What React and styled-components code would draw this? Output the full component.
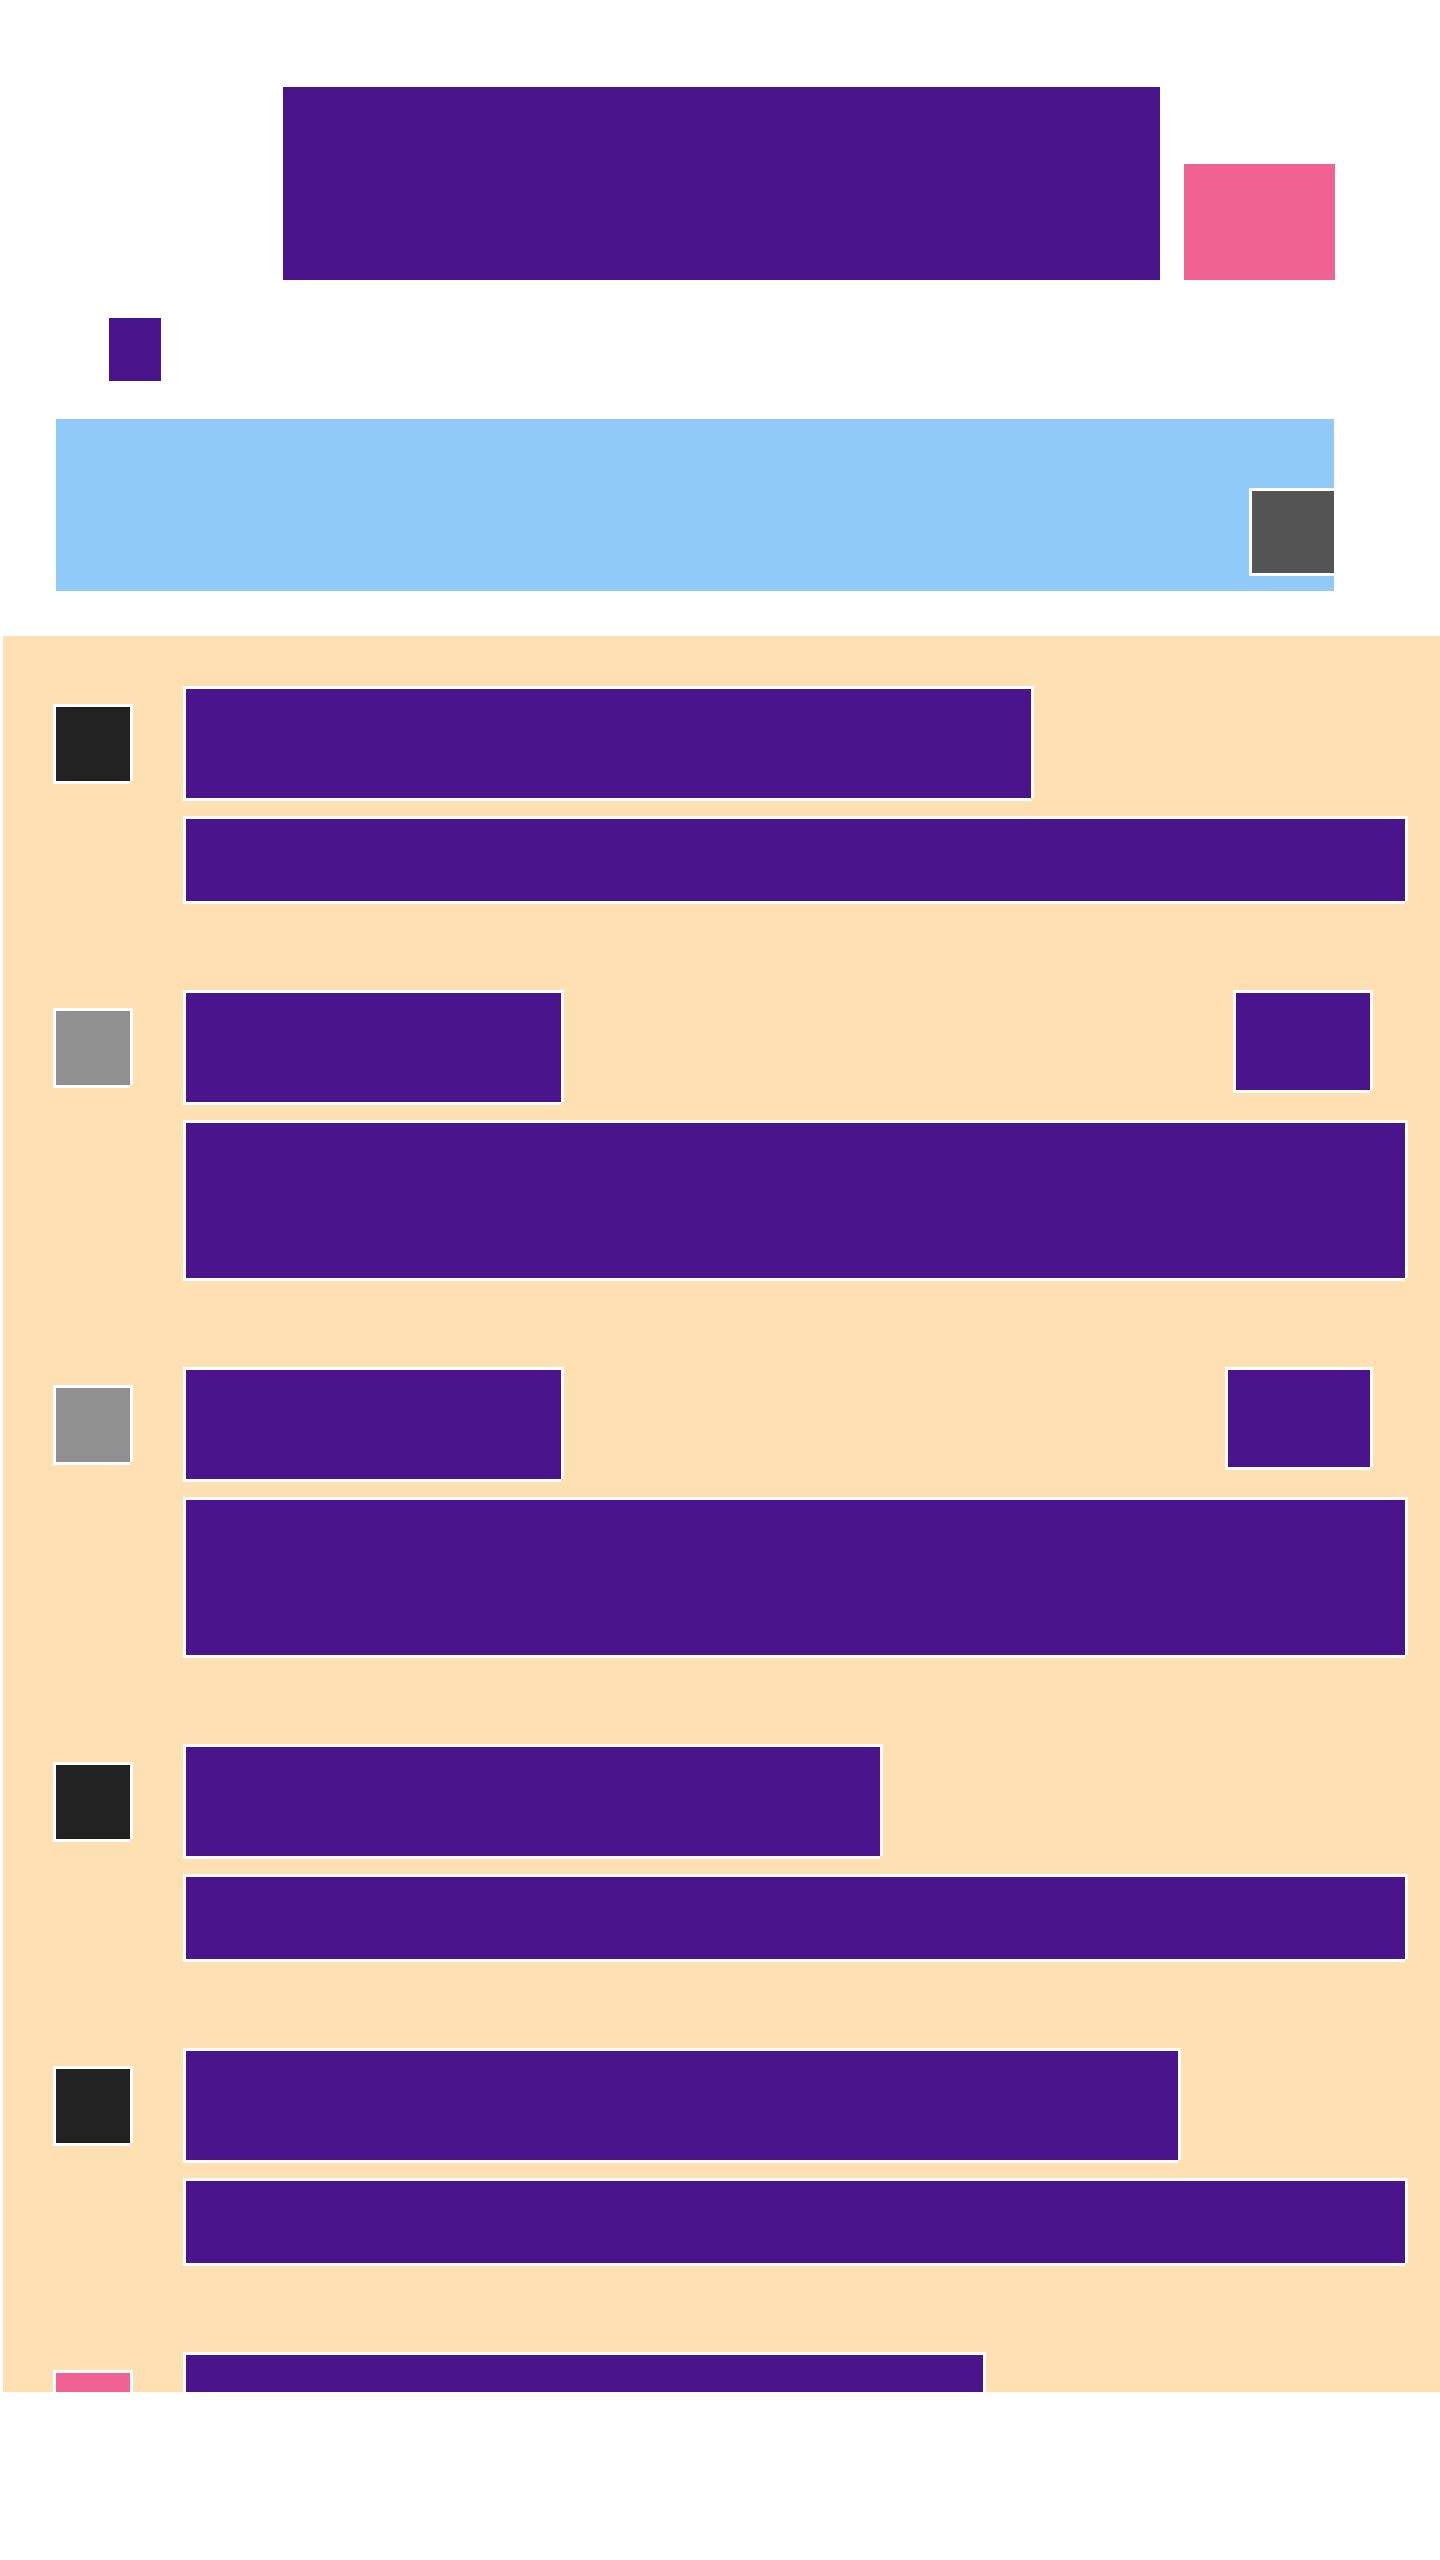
import React from 'react';
import styled, { createGlobalStyle } from 'styled-components';

const GlobalStyle = createGlobalStyle`
  *, *::before, *::after { box-sizing: border-box; }
  html, body { margin: 0; background: #ffffff; }
  body { font-family: Roboto, "Liberation Sans", sans-serif; }
`;

const purple = '#4a148c';
const pink = '#f06292';

const Page = styled.div`
  display: flex;
  flex-direction: column;
  height: 100vh;
  overflow: hidden;
`;

const Header = styled.header`
  flex: none;
  display: flex;
  align-items: flex-end;
  gap: 24px;
  padding: 87px 105px 0 283px;
`;

const Heading = styled.div`
  flex: 1;
  height: 193px;
  background: ${purple};
`;

const HeaderAction = styled.div`
  flex: none;
  width: 151px;
  height: 116px;
  background: ${pink};
`;

const Subheader = styled.div`
  flex: none;
  padding: 38px 109px;
`;

const Marker = styled.div`
  width: 52px;
  height: 63px;
  background: ${purple};
`;

const Banner = styled.section`
  flex: none;
  display: flex;
  align-items: flex-end;
  justify-content: flex-end;
  height: 172px;
  margin: 0 106px 45px 56px;
  padding-bottom: 15px;
  background: #90caf9;
  overflow: hidden;
`;

/* A white frame whose bottom right corner is notched out. */
const Framed = styled.div`
  border: 3px solid #ffffff;
  background: ${(p) => p.$color || purple};
  clip-path: polygon(
    0 0,
    100% 0,
    100% calc(100% - 3px),
    calc(100% - 3px) calc(100% - 3px),
    calc(100% - 3px) 100%,
    0 100%
  );
`;

const BannerIcon = styled(Framed)`
  flex: none;
  width: 88px;
  height: 88px;
  margin-right: -3px;
`;

const List = styled.ul`
  flex: 1;
  min-height: 0;
  display: flex;
  flex-direction: column;
  gap: 86px;
  margin: 0 0 0 3px;
  padding: 50px 32px 0 50px;
  list-style: none;
  background: #ffe0b2;
  overflow: hidden;
`;

const Item = styled.li`
  flex: none;
  display: flex;
  align-items: flex-start;
  gap: 50px;
`;

const Avatar = styled(Framed)`
  flex: none;
  width: 80px;
  height: 80px;
  margin-top: 18px;
`;

const Content = styled.div`
  flex: 1;
  min-width: 0;
  display: flex;
  flex-direction: column;
  gap: 15px;
`;

const TitleRow = styled.div`
  display: flex;
  align-items: flex-start;
  justify-content: space-between;
  padding-right: 35px;
`;

const Title = styled(Framed)`
  width: ${(p) => p.$width}px;
  height: 115px;
`;

const Badge = styled(Framed)`
  flex: none;
  width: ${(p) => p.$width}px;
  height: 103px;
`;

const Description = styled(Framed)`
  height: ${(p) => (p.$tall ? 161 : 88)}px;
`;

const Footer = styled.footer`
  flex: none;
  height: 168px;
`;

const items = [
  { id: 1, avatar: '#222222', title: 851 },
  { id: 2, avatar: '#909090', title: 381, badge: 140, tall: true },
  { id: 3, avatar: '#909090', title: 381, badge: 148, tall: true },
  { id: 4, avatar: '#222222', title: 700 },
  { id: 5, avatar: '#222222', title: 998 },
  { id: 6, avatar: pink, title: 803 },
];

export default function App() {
  return (
    <>
      <GlobalStyle />
      <Page>
        <Header>
          <Heading />
          <HeaderAction />
        </Header>
        <Subheader>
          <Marker />
        </Subheader>
        <Banner>
          <BannerIcon $color="#545454" />
        </Banner>
        <List>
          {items.map((item) => (
            <Item key={item.id}>
              <Avatar $color={item.avatar} />
              <Content>
                <TitleRow>
                  <Title $width={item.title} />
                  {item.badge && <Badge $width={item.badge} />}
                </TitleRow>
                <Description $tall={item.tall} />
              </Content>
            </Item>
          ))}
        </List>
        <Footer />
      </Page>
    </>
  );
}
